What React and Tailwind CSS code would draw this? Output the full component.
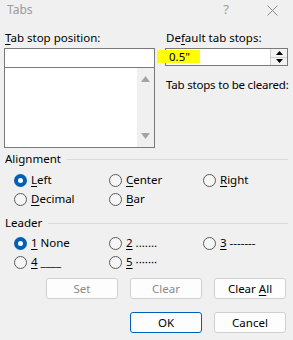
import React from 'react';

const Radio = ({ checked }) =>
  checked ? (
    <span className="w-[13px] h-[13px] rounded-full bg-[#005fb8] flex items-center justify-center shrink-0">
      <span className="w-[5px] h-[5px] rounded-full bg-white" />
    </span>
  ) : (
    <span className="w-[13px] h-[13px] rounded-full border border-[#5a5a5a] bg-[#f6f6f6] shrink-0" />
  );

const Option = ({ checked, u, rest, className = '' }) => (
  <label className={`flex items-center gap-[4px] h-[16px] whitespace-nowrap ${className}`}>
    <Radio checked={checked} />
    <span>
      <span className="underline underline-offset-2">{u}</span>
      {rest}
    </span>
  </label>
);

const Group = ({ title }) => (
  <div className="flex items-center gap-[6px] h-[16px] pl-[5px] pr-[5px]">
    <span>{title}</span>
    <span className="flex-1 h-px bg-[#dadada]" />
  </div>
);

const Btn = ({ children, disabled, primary }) => (
  <button
    className={`w-[72px] h-[21px] rounded-[3px] border bg-[#fdfdfd] text-[11.5px] ${
      primary ? 'border-[#005fb8]' : 'border-[#d0d0d0]'
    } ${disabled ? 'text-[#8a8a8a]' : 'text-black'}`}
  >
    {children}
  </button>
);

export default function App() {
  return (
    <div
      className="w-[293px] h-[340px] bg-[#f0f0f0] text-[11.5px] text-black overflow-hidden whitespace-nowrap"
      style={{ fontFamily: '"Noto Sans", sans-serif' }}
    >
      {/* title bar */}
      <div className="h-[20px] flex items-center pl-[7px] text-[#9a9a9a]">
        <span className="flex-1 text-[12px]">Tabs</span>
        <span className="mr-[38px] text-[13px]">?</span>
        <svg width="11" height="11" viewBox="0 0 11 11" className="mr-[15px]">
          <path d="M0.5 0.5 L10.5 10.5 M10.5 0.5 L0.5 10.5" stroke="#8a8a8a" strokeWidth="1" />
        </svg>
      </div>

      {/* top section */}
      <div className="flex pt-[10px] pl-[4px]">
        <div className="w-[151px] flex flex-col">
          <div className="h-[16px] leading-[16px] pl-[1px] mb-[2px]">
            <span className="underline underline-offset-2">T</span>ab stop position:
          </div>
          <div className="h-[20px] bg-white border border-[#7a7a7a]" />
          <div className="h-[81px] -mt-px bg-white border border-[#7a7a7a] flex justify-end">
            <div className="w-[17px] bg-[#f0f0f0] flex flex-col items-center justify-between py-[8px]">
              <svg width="9" height="6" viewBox="0 0 9 6">
                <path d="M4.5 0 L9 6 L0 6 Z" fill="#a3a3a3" />
              </svg>
              <svg width="9" height="6" viewBox="0 0 9 6">
                <path d="M0 0 L9 0 L4.5 6 Z" fill="#a3a3a3" />
              </svg>
            </div>
          </div>
        </div>

        <div className="w-[123px] ml-[10px] flex flex-col">
          <div className="h-[16px] leading-[16px] pl-[1px] mb-[2px]">
            De<span className="underline underline-offset-2">f</span>ault tab stops:
          </div>
          <div className="relative h-[18px] bg-white border border-[#7a7a7a] flex">
            <div className="absolute left-[-9px] top-[1px] w-[43px] h-[13px] bg-[#ffff00]" />
            <span className="relative flex-1 pl-[3px] leading-[16px]">0.5"</span>
            <div className="w-[17px] border-l border-[#cfcfcf] flex flex-col bg-[#f3f3f3]">
              <div className="flex-1 flex items-center justify-center border-b border-[#cfcfcf]">
                <svg width="7" height="4" viewBox="0 0 7 4">
                  <path d="M3.5 0 L7 4 L0 4 Z" fill="#000" />
                </svg>
              </div>
              <div className="flex-1 flex items-center justify-center">
                <svg width="7" height="4" viewBox="0 0 7 4">
                  <path d="M0 0 L7 0 L3.5 4 Z" fill="#000" />
                </svg>
              </div>
            </div>
          </div>
          <div className="h-[16px] leading-[16px] pl-[1px] mt-[11px] tracking-[-0.2px]">
            Tab stops to be cleared:
          </div>
        </div>
      </div>

      {/* alignment */}
      <div className="mt-[3px]">
        <Group title="Alignment" />
        <div className="grid grid-cols-[95px_94px_80px] pl-[14px] mt-[5px] gap-y-[3px]">
          <Option checked u="L" rest="eft" />
          <Option u="C" rest="enter" />
          <Option u="R" rest="ight" />
          <Option u="D" rest="ecimal" />
          <Option u="B" rest="ar" />
        </div>
      </div>

      {/* leader */}
      <div className="mt-[8px]">
        <Group title="Leader" />
        <div className="grid grid-cols-[95px_94px_80px] pl-[14px] mt-[4px] gap-y-[3px]">
          <Option checked u="1" rest=" None" />
          <Option u="2" rest=" ......." />
          <Option u="3" rest=" -------" />
          <Option u="4" rest=" ____" />
          <Option u="5" rest=" ·······" />
        </div>
      </div>

      {/* buttons */}
      <div className="flex justify-end gap-[12px] pr-[7px] mt-[8px]">
        <Btn disabled>Set</Btn>
        <Btn disabled>Clear</Btn>
        <Btn>
          Clear <span className="underline underline-offset-2">A</span>ll
        </Btn>
      </div>
      <div className="flex justify-end gap-[12px] pr-[7px] mt-[13px]">
        <Btn primary>OK</Btn>
        <Btn>Cancel</Btn>
      </div>
    </div>
  );
}
